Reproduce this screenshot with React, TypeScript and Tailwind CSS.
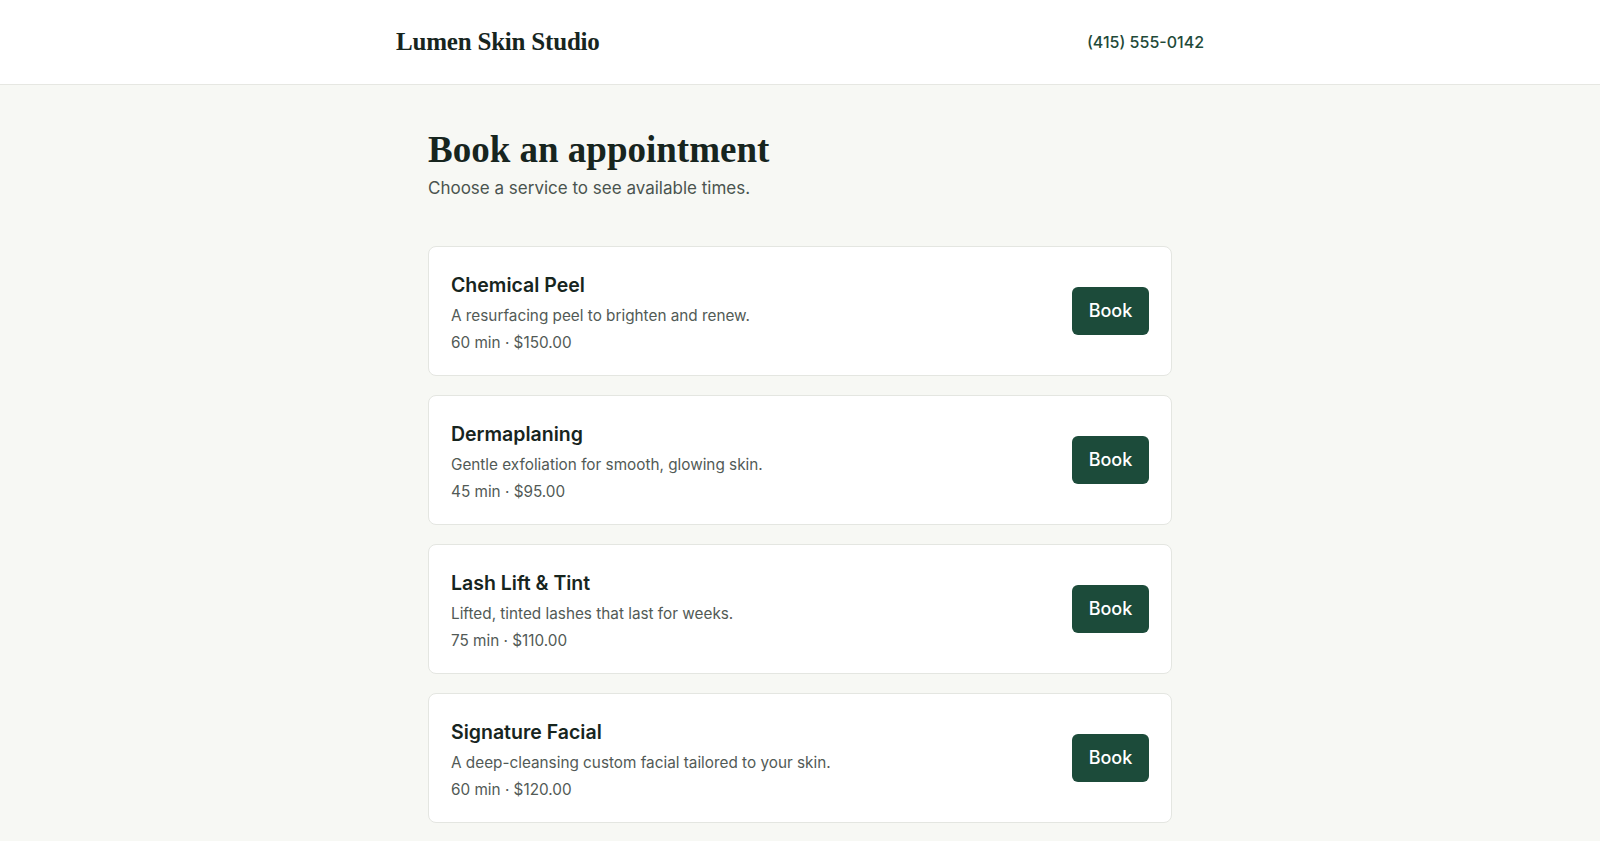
const services = [
  { name: "Chemical Peel", desc: "A resurfacing peel to brighten and renew.", minutes: 60, price: "$150.00" },
  { name: "Dermaplaning", desc: "Gentle exfoliation for smooth, glowing skin.", minutes: 45, price: "$95.00" },
  { name: "Lash Lift & Tint", desc: "Lifted, tinted lashes that last for weeks.", minutes: 75, price: "$110.00" },
  { name: "Signature Facial", desc: "A deep-cleansing custom facial tailored to your skin.", minutes: 60, price: "$120.00" },
];

const serif = "font-['Liberation_Serif',serif]";
const sans = "font-['Inter','Liberation_Sans',sans-serif]";

export default function App() {
  return (
    <div className={`min-h-screen bg-[#f7f8f4] ${sans}`}>
      <header className="h-[85px] border-b border-[#e6e7e2] bg-white">
        <div className="mx-auto flex h-full max-w-[848px] items-center justify-between px-5">
          <span className={`${serif} text-[25px] font-bold tracking-[-0.2px] text-[#17251e]`}>
            Lumen Skin Studio
          </span>
          <a className="text-[16px] font-medium text-[#1f4a39]">(415) 555-0142</a>
        </div>
      </header>

      <main className="mx-auto max-w-3xl px-3 pt-[43px] pb-10">
        <h1 className={`${serif} text-[37px] leading-[44px] font-bold text-[#17251e]`}>Book an appointment</h1>
        <p className="mt-[3px] text-[17px] leading-[26px] text-[#4a544f]">
          Choose a service to see available times.
        </p>

        <div className="mt-[45px] flex flex-col gap-[19px]">
          {services.map((s) => (
            <div
              key={s.name}
              className="flex items-center justify-between rounded-lg border border-[#e4e6e1] bg-white px-[22px] pt-6 pb-5"
            >
              <div>
                <h2 className="text-[19.5px] leading-[28px] font-semibold text-[#17251e]">{s.name}</h2>
                <p className="mt-[5px] text-[15.3px] leading-6 text-[#525a56]">{s.desc}</p>
                <p className="mt-[3px] text-[15.3px] leading-6 text-[#525a56]">
                  {s.minutes} min · {s.price}
                </p>
              </div>
              <button className="mb-[5px] h-12 w-[77px] rounded-md bg-[#1c4b3a] text-[18px] font-medium text-white">
                Book
              </button>
            </div>
          ))}
        </div>
      </main>
    </div>
  );
}
